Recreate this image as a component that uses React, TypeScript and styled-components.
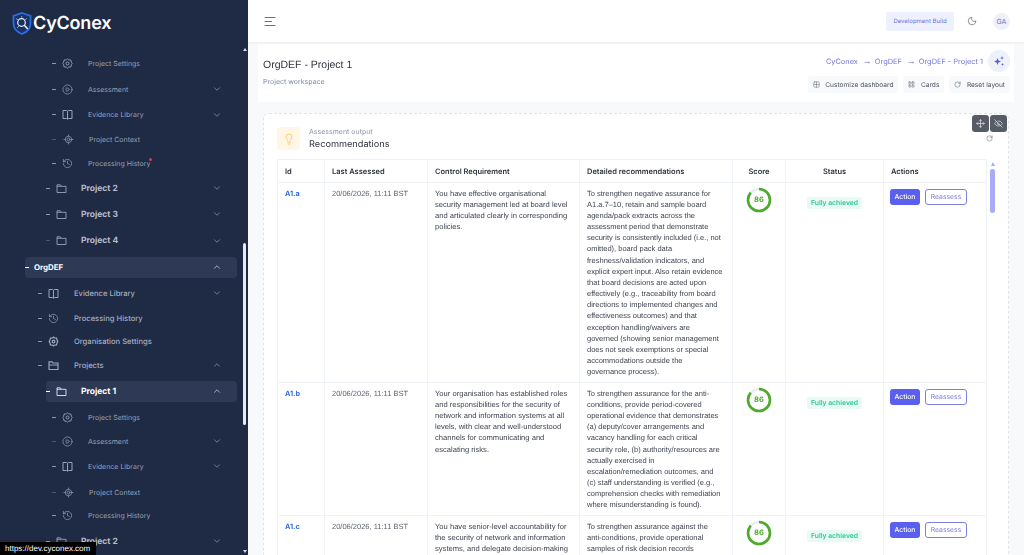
import React from 'react';
import styled, { createGlobalStyle } from 'styled-components';
import {
  ChevronDown,
  ChevronUp,
  CirclePlay,
  EyeOff,
  Grid2x2,
  History,
  Lightbulb,
  LayoutGrid,
  LocateFixed,
  Moon,
  Move,
  RotateCw,
} from 'lucide-react';

const GlobalStyle = createGlobalStyle`
  html, body {
    margin: 0;
    height: 100%;
    overflow: hidden;
    background: #f8f9fb;
    font-family: "Liberation Sans", Arial, sans-serif;
    text-rendering: geometricPrecision;
  }
  * { box-sizing: border-box; }
`;

type Level = 1 | 2 | 3 | 4;
type NavItem = {
  label: string;
  level: Level;
  h: number;
  icon?: React.ReactNode;
  chevron?: 'up' | 'down';
  active?: boolean;
  dot?: boolean;
  shift?: boolean;
  dim?: boolean;
};

const ic = { size: 11, strokeWidth: 1.5 };

function HexCog() {
  return (
    <svg width="11" height="11" viewBox="0 0 11 11" fill="none" stroke="currentColor" strokeWidth="0.900">
      <path d="M5.500 .8l1.100 1 2.300.3.500 2.200.8 1.200-.8 1.200-.5 2.200-2.300.3-1.100 1-1.100-1-2.300-.3-.5-2.200L.8 5.500l.8-1.200.5-2.200 2.300-.3z" />
      <circle cx="5.500" cy="5.500" r="1.500" />
    </svg>
  );
}

function BoldCog() {
  return (
    <svg width="11" height="11" viewBox="0 0 11 11" fill="none" stroke="currentColor" strokeWidth="1.300">
      <path d="M5.500 1l1 .9 2 .3.500 1.900.8 1.400-.8 1.400-.5 1.900-2 .3-1 .9-1-.9-2-.3L2 6.800l-.8-1.300L2 4.100l.5-1.900 2-.3z" />
      <circle cx="5.500" cy="5.500" r="1.300" />
    </svg>
  );
}

function BookIcon() {
  return (
    <svg width="11" height="11" viewBox="0 0 11 11" fill="none" stroke="currentColor" strokeWidth="1">
      <path d="M1 1.500h3.500l1 .7 1-.7H10v8H6.500l-1 .7-1-.7H1zM5.500 2.200v8" />
    </svg>
  );
}

function FolderIcon() {
  return (
    <svg width="11" height="11" viewBox="0 0 11 11" fill="none" stroke="currentColor" strokeWidth="0.900">
      <path d="M1 1.800h3.300l1 1.500H10v6.200H1zM1 3.300h4.300" />
    </svg>
  );
}

function FolderBold() {
  return (
    <svg width="11" height="11" viewBox="0 0 11 11" fill="none" stroke="currentColor" strokeWidth="1.200">
      <path d="M1 9.500V1.800h3l1 1.200h5v6.500zM1 5h9" />
    </svg>
  );
}

function SparkIcon() {
  return (
    <svg width="12" height="12" viewBox="0 0 12 12" fill="currentColor">
      <path d="M4.500 3l1 2.500 2.500 1-2.500 1-1 2.500-1-2.500L1 6.500l2.500-1z" />
      <path d="M9 1l.5 1.500L11 3l-1.500.5L9 5l-.5-1.500L7 3l1.500-.5z" />
      <path d="M9.500 8l.4 1.100 1.100.4-1.100.4-.4 1.100-.4-1.100L8 9.500l1.100-.4z" />
    </svg>
  );
}

const NAV: NavItem[] = [
  { label: 'Project Settings', level: 4, h: 26, icon: <HexCog /> },
  { label: 'Assessment', level: 4, h: 26, icon: <CirclePlay {...ic} />, chevron: 'down' },
  { label: 'Evidence Library', level: 4, h: 25, icon: <BookIcon />, chevron: 'down' },
  { label: 'Project Context', level: 4, h: 24, icon: <LocateFixed {...ic} />, shift: true, dim: true },
  { label: 'Processing History', level: 4, h: 24, icon: <History {...ic} />, dot: true },
  { label: 'Project 2', level: 3, h: 26, icon: <FolderIcon />, chevron: 'down' },
  { label: 'Project 3', level: 3, h: 26, icon: <FolderIcon />, chevron: 'down' },
  { label: 'Project 4', level: 3, h: 27, icon: <FolderIcon />, chevron: 'down', dim: true },
  { label: 'OrgDEF', level: 1, h: 26, chevron: 'up', active: true },
  { label: 'Evidence Library', level: 2, h: 26, icon: <BookIcon />, chevron: 'down' },
  { label: 'Processing History', level: 2, h: 24, icon: <History {...ic} /> },
  { label: 'Organisation Settings', level: 2, h: 23, icon: <BoldCog /> },
  { label: 'Projects', level: 2, h: 24, icon: <FolderBold />, chevron: 'up' },
  { label: 'Project 1', level: 3, h: 28, icon: <FolderIcon />, chevron: 'up', active: true },
  { label: 'Project Settings', level: 4, h: 24, icon: <HexCog /> },
  { label: 'Assessment', level: 4, h: 24, icon: <CirclePlay {...ic} />, chevron: 'down', dim: true },
  { label: 'Evidence Library', level: 4, h: 26, icon: <BookIcon />, chevron: 'down' },
  { label: 'Project Context', level: 4, h: 26, icon: <LocateFixed {...ic} />, shift: true, dim: true },
  { label: 'Processing History', level: 4, h: 21, icon: <History {...ic} /> },
  { label: 'Project 2', level: 3, h: 30, icon: <FolderIcon />, chevron: 'down' },
];

const ROWS = [
  {
    id: 'A1.a',
    req: 'You have effective organisational security management led at board level and articulated clearly in corresponding policies.',
    rec: 'To strengthen negative assurance for A1.a.7–10, retain and sample board agenda/pack extracts across the assessment period that demonstrate security is consistently included (i.e., not omitted), board pack data freshness/validation indicators, and explicit expert input. Also retain evidence that board decisions are acted upon effectively (e.g., traceability from board directions to implemented changes and effectiveness outcomes) and that exception handling/waivers are\ngoverned (showing senior management does not seek exemptions or special accommodations outside the\ngovernance process).',
  },
  {
    id: 'A1.b',
    req: 'Your organisation has established roles and responsibilities for the security of network and information systems at all levels, with clear and well-understood channels for communicating and escalating risks.',
    rec: 'To strengthen assurance for the anti-conditions, provide period-covered operational evidence that demonstrates (a) deputy/cover arrangements and vacancy handling for each critical security role, (b) authority/resources are actually exercised in escalation/remediation outcomes, and (c) staff understanding is verified (e.g., comprehension checks with remediation where misunderstanding is found).',
  },
  {
    id: 'A1.c',
    req: 'You have senior-level accountability for the security of network and information systems, and delegate decision-making',
    rec: 'To strengthen assurance against the anti-conditions, provide operational samples of risk decision records',
  },
];

function LogoMark() {
  return (
    <svg width="20" height="23" viewBox="0 0 20 23" fill="none">
      <path d="M10 1l8.500 3v7.500c0 5-3.600 8.600-8.500 10.500C5.100 20.100 1.500 16.500 1.500 11.500V4L10 1z" stroke="#2a6fe4" strokeWidth="1.800" fill="#1a3263" />
      <path d="M4 6.500l3 2M14.800 6.500l-2.500 1.800M9.800 4v2.500M5 16l2.300-2.300" stroke="#9ab9ef" strokeWidth="0.800" />
      <circle cx="9.500" cy="10.500" r="3.800" stroke="#eef2fa" strokeWidth="1.200" />
      <path d="M12.300 13.300l3.500 3.700" stroke="#eef2fa" strokeWidth="1.600" />
    </svg>
  );
}

function ScoreRing({ value }: { value: number }) {
  const r = 11;
  const c = 2 * Math.PI * r;
  return (
    <RingBox>
      <svg width="26" height="26" viewBox="0 0 26 26">
        <circle cx="13" cy="13" r={r} fill="none" stroke="#e9eef0" strokeWidth="2.600" />
        <circle
          cx="13"
          cy="13"
          r={r}
          fill="none"
          stroke="#4dab2b"
          strokeWidth="2.600"
          strokeDasharray={`${(c * value) / 100} ${c}`}
          transform="rotate(-90 13 13)"
        />
      </svg>
      <RingValue>{value}</RingValue>
    </RingBox>
  );
}

function SideRow({ item }: { item: NavItem }) {
  return (
    <RowSlot $h={item.h}>
      <RowPill $level={item.level} $active={!!item.active}>
        <Dash $active={!!item.active} $dim={!!item.dim} />
        {item.icon && <RowIcon $shift={!!item.shift}>{item.icon}</RowIcon>}
        <RowLabel $level={item.level} $active={!!item.active}>
          {item.label}
          {item.dot && <RedDot />}
        </RowLabel>
        {item.chevron === 'down' && <ChevronDown size={10} strokeWidth={1.6} />}
        {item.chevron === 'up' && <ChevronUp size={10} strokeWidth={1.6} />}
      </RowPill>
    </RowSlot>
  );
}

export default function App() {
  return (
    <Shell>
      <GlobalStyle />
      <Sidebar>
        <LogoBar>
          <LogoMark />
          <LogoText>CyConex</LogoText>
        </LogoBar>
        <NavList>
          {NAV.map((item, i) => (
            <SideRow key={i} item={item} />
          ))}
        </NavList>
        <SideTrack>
          <SideArrow $up />
          <SideThumb />
          <SideArrow />
        </SideTrack>
      </Sidebar>
      <Main>
        <TopBar>
          <MenuIcon width="12" height="11" viewBox="0 0 12 11">
            <path d="M1 1.500h10M1 5.500h6.500M1 9.500h10" stroke="#6b7280" strokeWidth="1" strokeLinecap="round" />
          </MenuIcon>
          <TopRight>
            <BuildBadge>Development Build</BuildBadge>
            <Moon size={10} strokeWidth={1.5} color="#4b5563" />
            <Avatar>GA</Avatar>
          </TopRight>
        </TopBar>
        <Content>
          <TitleCard>
            <TitleBlock>
              <PageTitle>OrgDEF - Project 1</PageTitle>
              <PageSub>Project workspace</PageSub>
            </TitleBlock>
            <TitleActions>
              <CrumbRow>
                <Crumb>CyConex</Crumb>
                <CrumbArrow>→</CrumbArrow>
                <Crumb>OrgDEF</Crumb>
                <CrumbArrow>→</CrumbArrow>
                <Crumb>OrgDEF - Project 1</Crumb>
                <RoundBtn>
                  <SparkIcon />
                </RoundBtn>
              </CrumbRow>
              <ToolRow>
                <ToolBtn>
                  <Grid2x2 size={7} strokeWidth={1.5} />
                  Customize dashboard
                </ToolBtn>
                <ToolBtn>
                  <LayoutGrid size={7} strokeWidth={1.5} />
                  Cards
                </ToolBtn>
                <ToolBtn>
                  <RotateCw size={7} strokeWidth={1.6} />
                  Reset layout
                </ToolBtn>
              </ToolRow>
            </TitleActions>
          </TitleCard>
          <Widget>
            <WidgetTools>
              <DarkBtn>
                <Move size={9} strokeWidth={1.8} />
              </DarkBtn>
              <DarkBtn>
                <EyeOff size={9} strokeWidth={1.8} />
              </DarkBtn>
              <RefreshBtn>
                <RotateCw size={7} strokeWidth={1.6} />
              </RefreshBtn>
            </WidgetTools>
            <WidgetHead>
              <BulbTile>
                <Lightbulb size={12} strokeWidth={1.6} />
              </BulbTile>
              <div>
                <WidgetEyebrow>Assessment output</WidgetEyebrow>
                <WidgetTitle>Recommendations</WidgetTitle>
              </div>
            </WidgetHead>
            <TableWrap>
              <Table>
                <colgroup>
                  <col width="47" />
                  <col width="103" />
                  <col width="152" />
                  <col width="153" />
                  <col width="53" />
                  <col width="98" />
                  <col width="103" />
                </colgroup>
                <thead>
                  <tr>
                    <Th>Id</Th>
                    <Th>Last Assessed</Th>
                    <Th>Control Requirement</Th>
                    <Th>Detailed recommendations</Th>
                    <Th $center>Score</Th>
                    <Th $center>Status</Th>
                    <Th>Actions</Th>
                  </tr>
                </thead>
                <tbody>
                  {ROWS.map(row => (
                    <tr key={row.id}>
                      <Td>
                        <IdLink>{row.id}</IdLink>
                      </Td>
                      <Td>
                        <DateText>20/06/2026, 11:11 BST</DateText>
                      </Td>
                      <Td>{row.req}</Td>
                      <RecTd>{row.rec}</RecTd>
                      <Td>
                        <ScoreRing value={86} />
                      </Td>
                      <Td>
                        <StatusWrap>
                          <StatusBadge>Fully achieved</StatusBadge>
                        </StatusWrap>
                      </Td>
                      <Td>
                        <ActionRow>
                          <ActionBtn>Action</ActionBtn>
                          <ReassessBtn>Reassess</ReassessBtn>
                        </ActionRow>
                      </Td>
                    </tr>
                  ))}
                </tbody>
              </Table>
              <TableTrack>
                <TrackArrow />
                <TableThumb />
              </TableTrack>
            </TableWrap>
          </Widget>
        </Content>
      </Main>
      <StatusUrl>https://dev.cyconex.com</StatusUrl>
    </Shell>
  );
}

const Shell = styled.div`
  width: 1024px;
  height: 555px;
  display: flex;
  overflow: hidden;
  position: relative;
`;

const Sidebar = styled.aside`
  width: 248px;
  flex: none;
  height: 555px;
  background: #1f2a44;
  position: relative;
  overflow: hidden;
`;

const LogoBar = styled.div`
  height: 50px;
  padding: 0 0 4px 12px;
  display: flex;
  align-items: center;
  gap: 1px;
`;

const LogoText = styled.span`
  font-family: Inter, sans-serif;
  font-weight: 600;
  font-size: 18px;
  letter-spacing: -0.2px;
  color: #fff;
`;

const NavList = styled.nav`
  display: flex;
  flex-direction: column;
  padding: 0 11px 0 0;
`;

const RowSlot = styled.div<{ $h: number }>`
  height: ${p => p.$h}px;
  flex: none;
  display: flex;
  align-items: center;
`;

const levelLeft = { 1: 25, 2: 38, 3: 46, 4: 52 } as const;

const RowPill = styled.div<{ $level: Level; $active: boolean }>`
  height: 21px;
  width: 100%;
  margin-left: ${p => levelLeft[p.$level]}px;
  padding-right: 15px;
  display: flex;
  align-items: center;
  border-radius: 4px;
  color: ${p => (p.$active ? '#e5e8f0' : '#9aa3b8')};
  background: ${p => (p.$active ? '#2e3a55' : 'transparent')};
`;

const Dash = styled.span<{ $active: boolean; $dim: boolean }>`
  width: 4px;
  height: 1px;
  flex: none;
  background: ${p => (p.$active ? '#fff' : p.$dim ? '#4d5770' : '#8d96ab')};
`;

const RowIcon = styled.span<{ $shift: boolean }>`
  width: 11px;
  flex: none;
  display: flex;
  margin-left: ${p => (p.$shift ? 7 : 6)}px;
`;

const labelLeft = { 1: 5, 2: 15, 3: 14, 4: 15 } as const;

const RowLabel = styled.span<{ $level: Level; $active: boolean }>`
  flex: 1;
  position: relative;
  font-family: Inter, sans-serif;
  white-space: nowrap;
  margin-left: ${p => labelLeft[p.$level]}px;
  padding-top: ${p => (p.$level === 3 ? 1 : 0)}px;
  font-size: ${p => (p.$level === 4 ? 7 : p.$level === 3 ? 8.5 : p.$level === 1 ? 7.9 : 7.6)}px;
  font-weight: ${p => (p.$level === 3 || p.$level === 1 ? 700 : p.$level === 2 ? 500 : 400)};
  color: ${p => (p.$active ? '#fff' : p.$level === 3 ? '#b4bbcb' : p.$level === 2 ? '#a5adc0' : '#98a1b6')};
`;

const RedDot = styled.span`
  position: absolute;
  top: -1px;
  margin-left: -1px;
  width: 3px;
  height: 3px;
  border-radius: 50%;
  background: #e0364c;
`;

const SideTrack = styled.div`
  position: absolute;
  right: 1px;
  top: 48px;
  bottom: 2px;
  width: 5px;
  display: flex;
  flex-direction: column;
  align-items: center;
  justify-content: space-between;
`;

const SideArrow = styled.div<{ $up?: boolean }>`
  width: 0;
  height: 0;
  border-left: 2px solid transparent;
  border-right: 2px solid transparent;
  border-${p => (p.$up ? 'bottom' : 'top')}: 3px solid #d9dce6;
`;

const SideThumb = styled.div`
  margin-top: 192px;
  margin-bottom: auto;
  height: 182px;
  width: 3px;
  border-radius: 2px;
  background: #e8eaf0;
`;

const Main = styled.main`
  flex: 1;
  min-width: 0;
  display: flex;
  flex-direction: column;
`;

const TopBar = styled.header`
  height: 42px;
  flex: none;
  background: #fff;
  box-shadow: 0 1px 3px rgba(30, 40, 70, 0.06);
  display: flex;
  align-items: center;
  justify-content: space-between;
  padding: 0 14px 0 16px;
  position: relative;
`;

const MenuIcon = styled.svg`
  display: block;
`;

const TopRight = styled.div`
  display: flex;
  align-items: center;
  gap: 13px;
`;

const BuildBadge = styled.div`
  height: 19px;
  width: 68px;
  display: flex;
  align-items: center;
  justify-content: center;
  border-radius: 2px;
  background: #eef0fd;
  color: #6b70dd;
  font-family: Inter, sans-serif;
  font-size: 6px;
  white-space: nowrap;
`;

const Avatar = styled.div`
  width: 17px;
  height: 17px;
  margin-left: 3px;
  border-radius: 50%;
  background: #eef0fb;
  color: #6b70dd;
  font-family: Inter, sans-serif;
  font-size: 7px;
  display: flex;
  align-items: center;
  justify-content: center;
`;

const Content = styled.div`
  flex: 1;
  min-height: 0;
  padding: 2px 10px 0;
  overflow: hidden;
  will-change: transform;
`;

const TitleCard = styled.section`
  height: 58px;
  background: #fff;
  padding: 0 4px 0 5px;
  display: flex;
  justify-content: space-between;
`;

const TitleBlock = styled.div`
  padding-top: 15px;
`;

const PageTitle = styled.h1`
  margin: 0;
  font-weight: 400;
  font-size: 10.5px;
  line-height: 13px;
  color: #2f3440;
`;

const PageSub = styled.p`
  margin: 5px 0 0;
  font-family: Inter, sans-serif;
  font-size: 7px;
  line-height: 10px;
  color: #7f88a3;
`;

const TitleActions = styled.div`
  display: flex;
  flex-direction: column;
  align-items: flex-end;
  padding-top: 6px;
`;

const CrumbRow = styled.div`
  display: flex;
  align-items: center;
  gap: 5px;
  height: 22px;
`;

const Crumb = styled.span`
  font-family: Inter, sans-serif;
  font-size: 7.4px;
  color: #7276d6;
`;

const CrumbArrow = styled.span`
  font-size: 9px;
  line-height: 9px;
  width: 7px;
  color: #6468c8;
`;

const RoundBtn = styled.span`
  width: 22px;
  height: 22px;
  border-radius: 50%;
  background: #eef0fc;
  color: #5b60dd;
  display: flex;
  align-items: center;
  justify-content: center;
`;

const ToolRow = styled.div`
  display: flex;
  gap: 5px;
  margin-top: 4px;
`;

const ToolBtn = styled.span`
  height: 17px;
  padding: 0 5px;
  display: flex;
  align-items: center;
  gap: 5.5px;
  background: #f8f9fb;
  border-radius: 2px;
  font-family: Inter, sans-serif;
  font-size: 6.6px;
  color: #4b5262;
`;

const Widget = styled.section`
  margin: 11px 5px 0;
  height: 520px;
  padding: 13px 14px 0 13px;
  background: #fff;
  border: 1px dashed #dfe3ea;
  border-radius: 6px;
  position: relative;
`;

const WidgetTools = styled.div`
  position: absolute;
  top: 1px;
  right: 1px;
  width: 35px;
  display: flex;
  flex-wrap: wrap;
  justify-content: space-between;
`;

const DarkBtn = styled.span`
  width: 17px;
  height: 17px;
  border-radius: 3px;
  background: #575b66;
  color: #e8e9ec;
  display: flex;
  align-items: center;
  justify-content: center;
`;

const RefreshBtn = styled.span`
  width: 17px;
  height: 13px;
  margin: 0 auto;
  color: #4b5563;
  display: flex;
  align-items: center;
  justify-content: center;
`;

const WidgetHead = styled.div`
  display: flex;
  gap: 9px;
  height: 32px;
`;

const BulbTile = styled.span`
  width: 23px;
  height: 23px;
  border-radius: 3px;
  background: #fff6e6;
  color: #f4bf4f;
  display: flex;
  align-items: center;
  justify-content: center;
`;

const WidgetEyebrow = styled.div`
  font-family: Inter, sans-serif;
  font-size: 7px;
  line-height: 10px;
  color: #8a93ab;
`;

const WidgetTitle = styled.div`
  margin-top: 2px;
  font-family: Inter, sans-serif;
  font-size: 9.2px;
  line-height: 12px;
  color: #2f3440;
`;

const TableWrap = styled.div`
  display: flex;
  align-items: flex-start;
  gap: 2px;
`;

const Table = styled.table`
  width: 709px;
  flex: none;
  table-layout: fixed;
  border-collapse: collapse;
`;

const Th = styled.th<{ $center?: boolean }>`
  height: 23px;
  padding: 0 7px;
  background: #fff;
  border: 1px solid #eff2f7;
  text-align: ${p => (p.$center ? 'center' : 'left')};
  font-family: Inter, sans-serif;
  font-size: 7.5px;
  font-weight: 600;
  color: #2f3440;
`;

const Td = styled.td`
  padding: 4.6px 9px 4.6px 7px;
  border: 1px solid #eff2f7;
  vertical-align: top;
  font-size: 7.6px;
  line-height: 11.17px;
  color: #3f4551;
`;

const RecTd = styled(Td)`
  padding-right: 8px;
  font-size: 7.5px;
  white-space: pre-line;
`;

const DateText = styled.span`
  font-size: 7.5px;
  white-space: nowrap;
  color: #5d6470;
`;

const IdLink = styled.span`
  font-family: Inter, sans-serif;
  font-size: 7.2px;
  font-weight: 700;
  color: #2f6fd6;
`;

const RingBox = styled.div`
  width: 26px;
  height: 26px;
  margin: -1px auto 0;
  position: relative;
  left: 1px;
`;

const RingValue = styled.span`
  position: absolute;
  inset: 0;
  display: flex;
  align-items: center;
  justify-content: center;
  font-family: Inter, sans-serif;
  font-size: 7.5px;
  font-weight: 700;
  color: #4dab2b;
`;

const StatusWrap = styled.div`
  display: flex;
  justify-content: center;
  padding-top: 9px;
  margin-right: -2px;
`;

const StatusBadge = styled.span`
  height: 12px;
  padding: 0 4px;
  display: flex;
  align-items: center;
  border-radius: 2px;
  background: #e9faf5;
  color: #2fcb9b;
  font-family: Inter, sans-serif;
  font-size: 6.8px;
  font-weight: 600;
  white-space: nowrap;
`;

const ActionRow = styled.div`
  display: flex;
  gap: 5px;
  padding-top: 1px;
  margin-left: -1px;
`;

const ActionBtn = styled.span`
  width: 30px;
  height: 16px;
  border-radius: 3px;
  background: #5b5fee;
  color: #fff;
  font-family: Inter, sans-serif;
  font-size: 6.8px;
  font-weight: 500;
  display: flex;
  align-items: center;
  justify-content: center;
`;

const ReassessBtn = styled(ActionBtn)`
  width: 42px;
  background: #fff;
  border: 1px solid #7d80dd;
  color: #7d80dd;
  font-weight: 400;
`;

const TableTrack = styled.div`
  width: 7px;
  flex: none;
  padding-top: 3px;
`;

const TrackArrow = styled.div`
  width: 0;
  height: 0;
  margin: 0 auto 3px;
  border-left: 2.5px solid transparent;
  border-right: 2.5px solid transparent;
  border-bottom: 4px solid #a9abf5;
`;

const TableThumb = styled.div`
  width: 5px;
  height: 44px;
  margin: 0 auto;
  border-radius: 3px;
  background: #a9abf5;
`;

const StatusUrl = styled.div`
  position: absolute;
  left: 0;
  bottom: 0;
  width: 96px;
  height: 13px;
  padding-left: 5px;
  background: #000;
  color: #fff;
  font-family: "Liberation Sans", Arial, sans-serif;
  font-size: 8px;
  line-height: 13px;
`;
